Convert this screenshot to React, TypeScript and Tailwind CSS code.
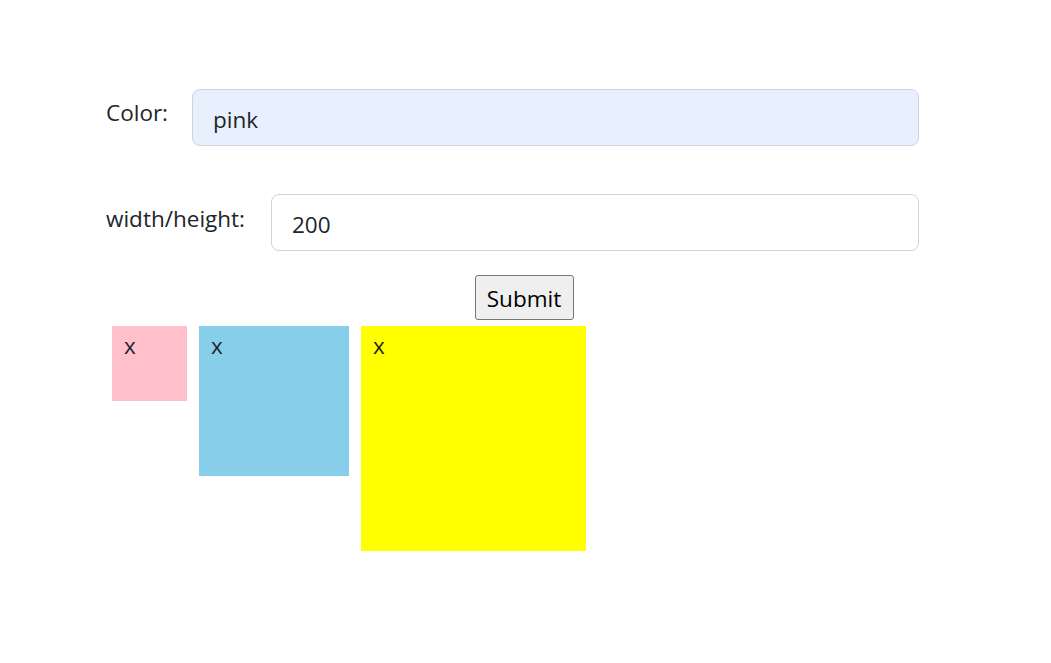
import { useState } from 'react';

type Box = { color: string; size: number };

function App() {
  const [color, setColor] = useState('pink');
  const [size, setSize] = useState('200');
  const [boxes, setBoxes] = useState<Box[]>([
    { color: 'pink', size: 75 },
    { color: 'skyblue', size: 150 },
    { color: 'yellow', size: 225 },
  ]);

  const addBox = () => setBoxes([...boxes, { color, size: Number(size) }]);

  const handleRemove = (idx: number) => {
    setBoxes(boxes.filter((_, i) => i !== idx));
  };

  return (
    <div className="min-h-screen w-full bg-white text-[22.5px] text-[#212529] font-['Segoe_UI','Open_Sans',sans-serif]">
      <form
        className="pl-[106px] pr-[132px] pt-[89px]"
        onSubmit={e => {
          e.preventDefault();
          addBox();
        }}
      >
        <div className="flex items-start gap-6">
          <label className="mt-[9px] w-[62px] whitespace-nowrap leading-[30px]">Color:</label>
          <input
            value={color}
            onChange={e => setColor(e.target.value)}
            className="h-[57px] flex-1 rounded-lg border border-[#ced4da] bg-[#e8f0fe] px-5 pt-[4px] text-[22.5px] text-[#212529] outline-none"
          />
        </div>
        <div className="mt-[48px] flex items-start gap-6">
          <label className="mt-[10px] w-[141px] whitespace-nowrap leading-[30px]">width/height:</label>
          <input
            value={size}
            onChange={e => setSize(e.target.value)}
            className="h-[57px] flex-1 rounded-lg border border-[#ced4da] bg-white px-5 pt-[4px] text-[22.5px] text-[#212529] outline-none"
          />
        </div>
      </form>
      <div className="mt-[24px] flex justify-center pr-[3px]">
        <button
          type="button"
          className="h-[45px] w-[99px] rounded-[3px] border border-[#767676] bg-[#efefef] pt-[4px] text-[22.5px] leading-none text-black"
          onClick={addBox}
        >
          Submit
        </button>
      </div>
      <div className="mt-[6px] flex items-start gap-3 pl-[112px]">
        {boxes.map((b, i) => (
          <div
            key={i}
            className="shrink-0 pl-3 pt-[5px] leading-[30px]"
            style={{ backgroundColor: b.color, width: b.size, height: b.size }}
            onClick={() => handleRemove(i)}
          >
            x
          </div>
        ))}
      </div>
    </div>
  );
}

export default App;
